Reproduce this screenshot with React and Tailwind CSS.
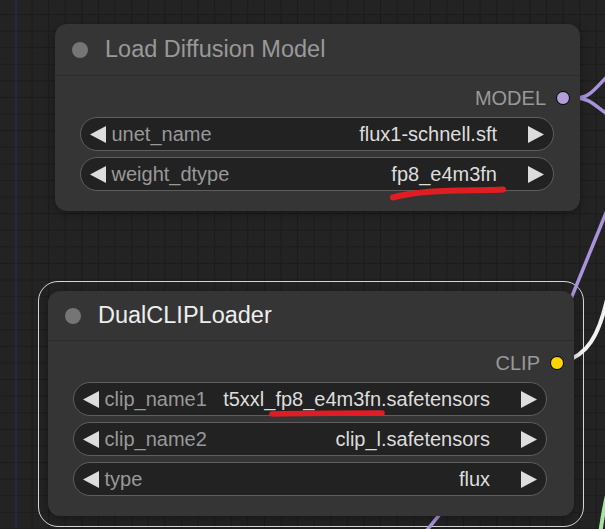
import React from 'react';

const LeftTri = () => (
  <svg width="16" height="17" viewBox="0 0 16 17" className="shrink-0">
    <polygon points="16,0 16,17 0,8.5" fill="#dddddd" />
  </svg>
);

const RightTri = () => (
  <svg width="16" height="17" viewBox="0 0 16 17" className="shrink-0">
    <polygon points="0,0 0,17 16,8.5" fill="#dddddd" />
  </svg>
);

const Combo = ({ label, value }) => (
  <div className="flex h-[34px] items-center rounded-full border-[1.5px] border-[#5e5e5e] bg-[#222222] pl-[8.5px] pr-[9px] text-[20px] leading-none">
    <LeftTri />
    <span className="ml-[6px] whitespace-nowrap text-[#999999]">{label}</span>
    <span className="ml-auto mr-[31px] whitespace-nowrap text-[#dddddd]">{value}</span>
    <RightTri />
  </div>
);

const Output = ({ label, color }) => (
  <div className="flex h-[20px] items-center justify-end pr-[10px] text-[20px] leading-none text-[#999999]">
    <span>{label}</span>
    <span className={`ml-[10px] h-[14px] w-[14px] rounded-full border-[1.5px] border-black ${color}`} />
  </div>
);

const Node = ({ title, titleColor, titleH, className, output, widgets, rightPad }) => (
  <div className={`absolute rounded-[12px] bg-[#353535] shadow-[0_2px_10px_rgba(0,0,0,0.35)] ${className}`}>
    <div className={`flex items-center gap-[17px] border-b border-[#2b2b2b] pl-[17px] ${titleH}`}>
      <span className="h-[16px] w-[16px] rounded-full bg-[#757575]" />
      <span className={`text-[23.5px] leading-none ${titleColor}`}>{title}</span>
    </div>
    <div className="flex flex-col pt-[12px] pb-[20px]">
      {output}
      <div className={`mt-[9px] flex flex-col gap-[6px] pl-[25px] ${rightPad}`}>
        {widgets.map((w) => (
          <Combo key={w.label} label={w.label} value={w.value} />
        ))}
      </div>
    </div>
  </div>
);

export default function App() {
  return (
    <div className="relative h-[529px] w-[605px] overflow-hidden bg-[#232323] bg-[linear-gradient(to_right,#1b1b1b_1px,transparent_1px),linear-gradient(to_bottom,#1b1b1b_1px,transparent_1px)] bg-[length:16.6px_16.6px] bg-[position:15px_14px] font-['Liberation_Sans',Arial,sans-serif]">
      {/* group edge on the left */}
      <div className="absolute left-[15px] top-0 h-full w-[2px] bg-[#1f2a47]" />

      {/* selection outline */}
      <div className="absolute left-[38px] top-[281px] h-[246px] w-[546px] rounded-[20px] border-[1.5px] border-[#d6d6d6]" />

      {/* links */}
      <svg className="absolute left-0 top-0" width="605" height="529" fill="none">
        <path d="M575 98 C592 98, 596 86, 612 72" stroke="#a994dc" strokeWidth="3.5" />
        <path d="M575 98 C592 98, 596 108, 612 117" stroke="#a994dc" strokeWidth="3.5" />
        <path d="M566 311 L610 203" stroke="#a994dc" strokeWidth="3.5" />
        <path d="M423 535 L445 508" stroke="#a994dc" strokeWidth="3.5" />
        <path d="M563 362 C585 356, 600 340, 610 285" stroke="#f2f2f2" strokeWidth="4" />
        <path d="M600 534 C603 515, 605 500, 609 488" stroke="#a6e3a1" strokeWidth="4" />
      </svg>

      <Node
        className="left-[55px] top-[24px] w-[525px]"
        titleH="h-[52px]"
        title="Load Diffusion Model"
        titleColor="text-[#999999]"
        rightPad="pr-[26px]"
        output={<Output label="MODEL" color="bg-[#b39ddb]" />}
        widgets={[
          { label: 'unet_name', value: 'flux1-schnell.sft' },
          { label: 'weight_dtype', value: 'fp8_e4m3fn' },
        ]}
      />

      <Node
        className="left-[48px] top-[291px] w-[526px]"
        titleH="h-[50px]"
        title="DualCLIPLoader"
        titleColor="text-[#eeeeee]"
        rightPad="pr-[27px]"
        output={<Output label="CLIP" color="bg-[#ffd500]" />}
        widgets={[
          { label: 'clip_name1', value: 't5xxl_fp8_e4m3fn.safetensors' },
          { label: 'clip_name2', value: 'clip_l.safetensors' },
          { label: 'type', value: 'flux' },
        ]}
      />

      {/* red pen marks */}
      <svg className="pointer-events-none absolute left-0 top-0" width="605" height="529" fill="none">
        <path
          d="M393 197.5 C410 192.5, 430 191, 460 190.5 S495 190, 503 189.5"
          stroke="#e11d24"
          strokeWidth="6"
          strokeLinecap="round"
        />
        <path d="M272 414 C310 413, 350 413, 382 413" stroke="#e11d24" strokeWidth="5.5" strokeLinecap="round" />
      </svg>
    </div>
  );
}
